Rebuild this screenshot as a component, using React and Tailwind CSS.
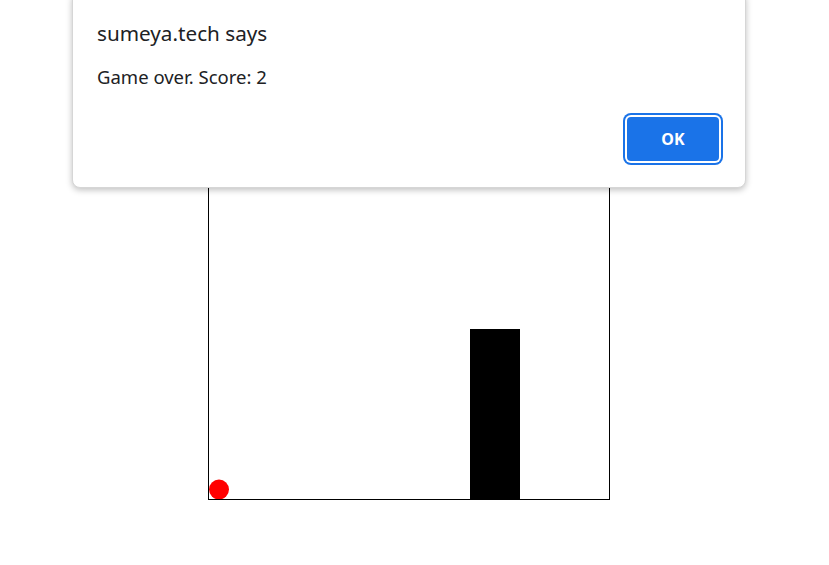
export default function App() {
  return (
    <div className="relative w-[829px] h-[565px] bg-white overflow-hidden font-['Noto_Sans',sans-serif]">
      {/* game canvas */}
      <div className="pt-[98px] pl-[208px]">
        <div className="w-[402px] h-[402px] border border-black">
          <svg width="400" height="400" viewBox="0 0 400 400" className="block">
            <rect x="261" y="230" width="50" height="170" fill="#000" />
            <circle cx="10" cy="390.5" r="10" fill="#ff0000" />
          </svg>
        </div>
      </div>

      {/* alert dialog */}
      <div className="absolute left-[72px] -top-2 w-[674px] h-[196px] bg-white border border-[#d6d6d6] rounded-lg shadow-[0_2px_6px_rgba(0,0,0,0.25)] flex flex-col pl-6 pr-[26px] pt-[26px] pb-[26px]">
        <div className="text-[20.7px] leading-[28px] text-[#202124]">sumeya.tech says</div>
        <div className="mt-[18px] text-[18.5px] leading-[24px] text-[#202124]">Game over. Score: 2</div>
        <div className="flex justify-end mt-auto">
          <button className="w-[92px] h-[44px] rounded bg-[#1a73e8] text-white text-[16px] font-bold ring-2 ring-[#1a73e8] ring-offset-2 ring-offset-white">
            OK
          </button>
        </div>
      </div>
    </div>
  );
}
